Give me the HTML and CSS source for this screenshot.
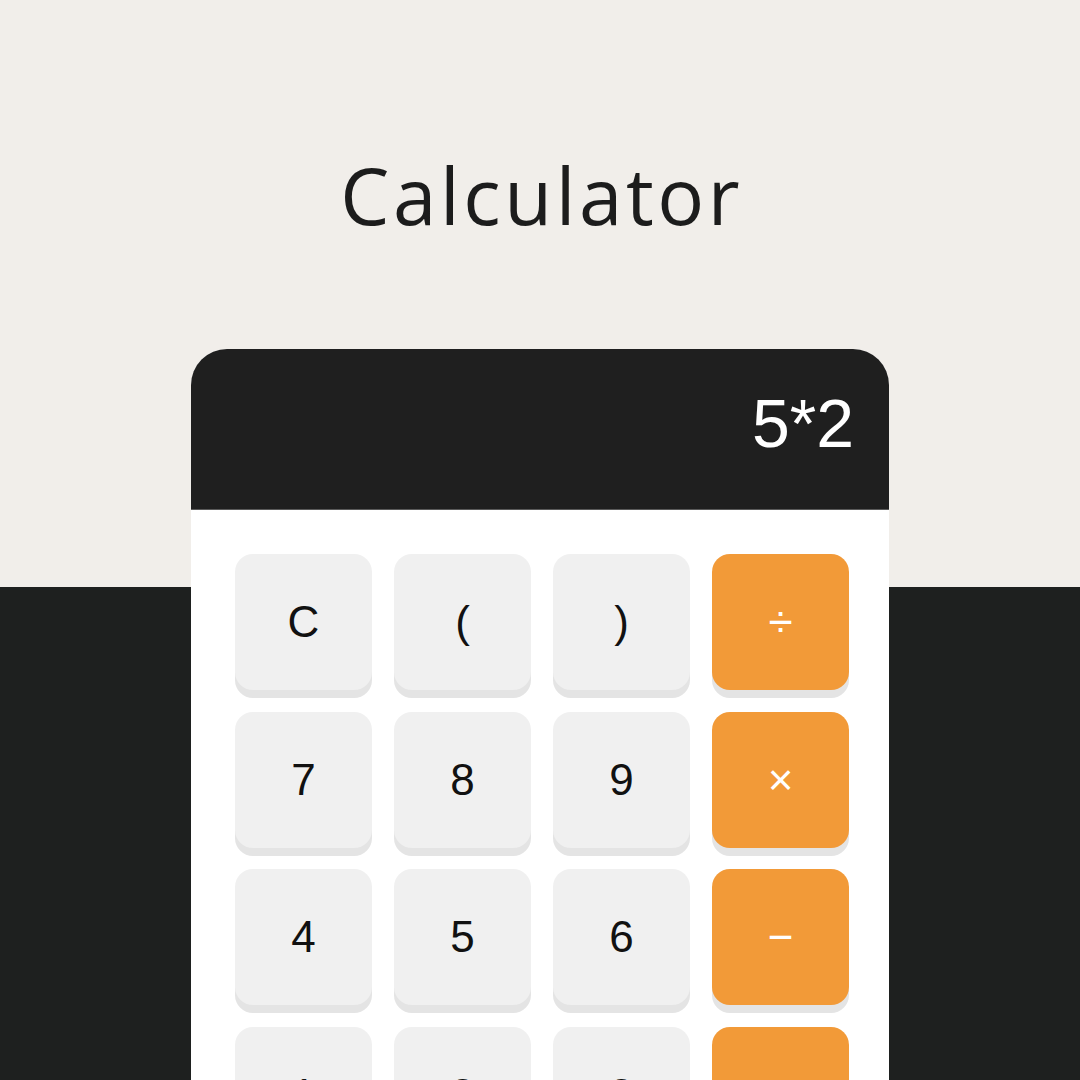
FILE: index.html
```html
<!DOCTYPE html>
<html lang="en">
<head>
<meta charset="utf-8">
<title>Calculator</title>
<link rel="stylesheet" href="styles.css">
</head>
<body>
<main class="page">
  <h1 class="title">Calculator</h1>
  <section class="calc">
    <div class="display">5*2</div>
    <div class="keys">
      <button class="key">C</button>
      <button class="key">(</button>
      <button class="key">)</button>
      <button class="key op">÷</button>
      <button class="key">7</button>
      <button class="key">8</button>
      <button class="key">9</button>
      <button class="key op">×</button>
      <button class="key">4</button>
      <button class="key">5</button>
      <button class="key">6</button>
      <button class="key op">−</button>
      <button class="key">1</button>
      <button class="key">2</button>
      <button class="key">3</button>
      <button class="key op">+</button>
    </div>
  </section>
</main>
</body>
</html>
```
FILE: styles.css
```css
html, body {
  margin: 0;
  padding: 0;
}
body {
  width: 1080px;
  height: 1080px;
  overflow: hidden;
  background: linear-gradient(to bottom, #f1eeea 0, #f1eeea 587px, #1e201f 587px, #1e201f 100%);
}
.page {
  display: flex;
  flex-direction: column;
  align-items: center;
  padding-top: 155px;
}
.title {
  margin: 0 0 114px;
  font-family: "Open Sans", "DejaVu Sans", sans-serif;
  font-weight: 400;
  font-size: 78px;
  line-height: 80px;
  color: #1c1c1c;
  letter-spacing: 3.6px;
  text-indent: 3.6px;
}
.calc {
  width: 698px;
  background: #ffffff;
  border-radius: 36px 36px 0 0;
  overflow: hidden;
  flex: none;
}
.display {
  height: 161px;
  box-sizing: border-box;
  padding: 36px 35px 0 0;
  background: #1f1f1f;
  border-bottom: 1px solid #5a5a5a;
  color: #ffffff;
  font-family: "Liberation Sans", Arial, sans-serif;
  font-size: 68px;
  line-height: 76px;
  text-align: right;
}
.keys {
  display: grid;
  grid-template-columns: repeat(4, 137px);
  grid-auto-rows: 136px;
  column-gap: 22px;
  row-gap: 21.5px;
  padding: 44px 44px 40px 44px;
}
.key {
  border: none;
  margin: 0;
  padding: 0;
  border-radius: 18px;
  background: #f0f0f0;
  box-shadow: 0 8px 0 #e4e4e4;
  color: #111111;
  font-family: "Liberation Sans", Arial, sans-serif;
  font-size: 44px;
  display: flex;
  align-items: center;
  justify-content: center;
}
.key.op {
  background: #f29a38;
  color: #ffffff;
}
```
